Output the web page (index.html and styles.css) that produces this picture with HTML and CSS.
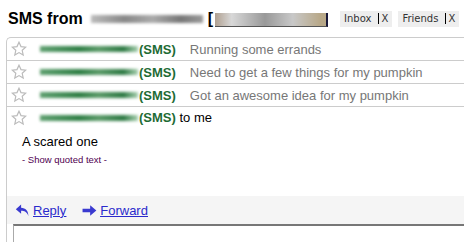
FILE: index.html
```html
<!DOCTYPE html>
<html lang="en">
<head>
  <meta charset="UTF-8">
  <title>SMS conversation</title>
  <link rel="stylesheet" href="styles.css">
</head>
<body>
  <!-- Subject line with labels -->
  <div class="subject">
    <h1>SMS from</h1>
    <span class="blur-name"></span>
    <span class="bracket">[</span>
    <span class="blur-number"></span>
    <div class="labels">
      <span class="label">Inbox <span class="label-x">X</span></span>
      <span class="label">Friends <span class="label-x">X</span></span>
    </div>
  </div>

  <div class="thread">
    <div class="row">
      <svg class="star" viewBox="0 0 16 16"><path d="M8 1.2l2 4.4 4.7.5-3.5 3.2 1 4.7L8 11.6 3.8 14l1-4.7L1.3 6.1 6 5.6z"/></svg>
      <span class="sender"></span>
      <span class="sms">(SMS)</span>
      <span class="snippet">Running some errands</span>
    </div>
    <div class="row">
      <svg class="star" viewBox="0 0 16 16"><path d="M8 1.2l2 4.4 4.7.5-3.5 3.2 1 4.7L8 11.6 3.8 14l1-4.7L1.3 6.1 6 5.6z"/></svg>
      <span class="sender"></span>
      <span class="sms">(SMS)</span>
      <span class="snippet">Need to get a few things for my pumpkin</span>
    </div>
    <div class="row">
      <svg class="star" viewBox="0 0 16 16"><path d="M8 1.2l2 4.4 4.7.5-3.5 3.2 1 4.7L8 11.6 3.8 14l1-4.7L1.3 6.1 6 5.6z"/></svg>
      <span class="sender"></span>
      <span class="sms">(SMS)</span>
      <span class="snippet">Got an awesome idea for my pumpkin</span>
    </div>

    <!-- Open message -->
    <div class="message">
      <div class="row open">
        <svg class="star" viewBox="0 0 16 16"><path d="M8 1.2l2 4.4 4.7.5-3.5 3.2 1 4.7L8 11.6 3.8 14l1-4.7L1.3 6.1 6 5.6z"/></svg>
        <span class="sender"></span>
        <span class="sms">(SMS)</span>
        <span class="to">&nbsp;to me</span>
      </div>
      <div class="body">
        <p>A scared one</p>
        <a class="quoted" href="#">- Show quoted text -</a>
      </div>
    </div>

    <div class="actions">
      <a href="#" class="action">
        <svg viewBox="0 0 16 14"><path d="M6.5 0.5L0.8 5.6 6.5 10.6V7.4c3.6 0 6 1 7.8 5.4 0-5.4-3-8.5-7.8-8.7z"/></svg>
        <span>Reply</span>
      </a>
      <a href="#" class="action">
        <svg viewBox="0 0 16 14"><path d="M0.5 5.2h8.2V1.4L15.4 7l-6.7 5.6V8.8H0.5z"/></svg>
        <span>Forward</span>
      </a>
    </div>

    <div class="compose"></div>
  </div>
</body>
</html>
```

FILE: styles.css
```css
body {
  margin: 0;
  font-family: "Liberation Sans", Arial, sans-serif;
  background: #fff;
  color: #000;
  overflow: hidden;
}

.subject {
  height: 37px;
  display: flex;
  align-items: center;
  padding-left: 8px;
  white-space: nowrap;
}

.subject h1 {
  margin: 0;
  font-size: 16px;
  font-weight: bold;
  flex-shrink: 0;
}

.blur-name {
  flex-shrink: 0;
  width: 112px;
  height: 8px;
  margin-left: 8px;
  background: linear-gradient(90deg, #bbb, #888 30%, #aaa 55%, #777 80%, #999);
  filter: blur(1.5px);
}

.bracket {
  font-weight: bold;
  font-size: 16px;
  margin-left: 5px;
}

.blur-number {
  flex-shrink: 0;
  width: 111px;
  height: 13px;
  margin-left: 2px;
  margin-top: 2px;
  background: linear-gradient(90deg, #b0a090, #d8d8d8 15%, #999 45%, #c8c8c8 70%, #b8a888 95%);
  border-right: 2px solid #1a1a3a;
  border-bottom: 1px solid #555;
  filter: blur(0.6px);
}

.labels {
  display: flex;
  gap: 6px;
  margin-left: 12px;
}

.label {
  background: #eee;
  color: #333;
  font-family: "DejaVu Sans", sans-serif;
  font-size: 10px;
  padding: 2px 4px;
  line-height: 12px;
}

.label-x {
  border-left: 1px solid #000;
  padding-left: 3px;
  margin-left: 3px;
}

.thread {
  margin-left: 6px;
  border-left: 1px solid #ccc;
  border-top: 1px solid #ccc;
  border-top-left-radius: 5px;
}

.row {
  height: 22px;
  border-bottom: 1px solid #ccc;
  display: flex;
  align-items: center;
  font-size: 13px;
  padding-left: 4px;
  white-space: nowrap;
}

.row.open {
  border-bottom: none;
  height: 21px;
}

.star {
  width: 16px;
  height: 16px;
  fill: none;
  stroke: #bbb;
  stroke-width: 1.2;
}

.sender {
  width: 98px;
  height: 6px;
  margin-left: 13px;
  background: linear-gradient(90deg, #5fa070, #2f7f45 40%, #5a9a68 60%, #2e7a44 85%, #a8d0b0);
  filter: blur(1.4px);
}

.sms {
  color: #1e6b34;
  font-weight: bold;
  margin-left: 1px;
}

.snippet {
  color: #777;
  margin-left: 14px;
}

.to {
  color: #000;
}

.body {
  padding: 6px 0 0 15px;
  height: 62px;
}

.body p {
  margin: 0;
  font-size: 13px;
  line-height: 15px;
}

.quoted {
  font-size: 9.5px;
  color: #500050;
  text-decoration: none;
  line-height: 14px;
}

.actions {
  background: #f5f5f5;
  height: 28px;
  display: flex;
  align-items: center;
  padding-left: 8px;
  gap: 16px;
}

.action {
  display: flex;
  align-items: center;
  gap: 3px;
  color: #2a2acc;
  font-size: 13px;
}

.action svg {
  width: 15px;
  height: 13px;
  fill: #3a3ad0;
}

.action span {
  text-decoration: underline;
}

.compose {
  margin-left: 6px;
  border-top: 2px solid #777;
  border-left: 1px solid #aaa;
  height: 16px;
}
```
